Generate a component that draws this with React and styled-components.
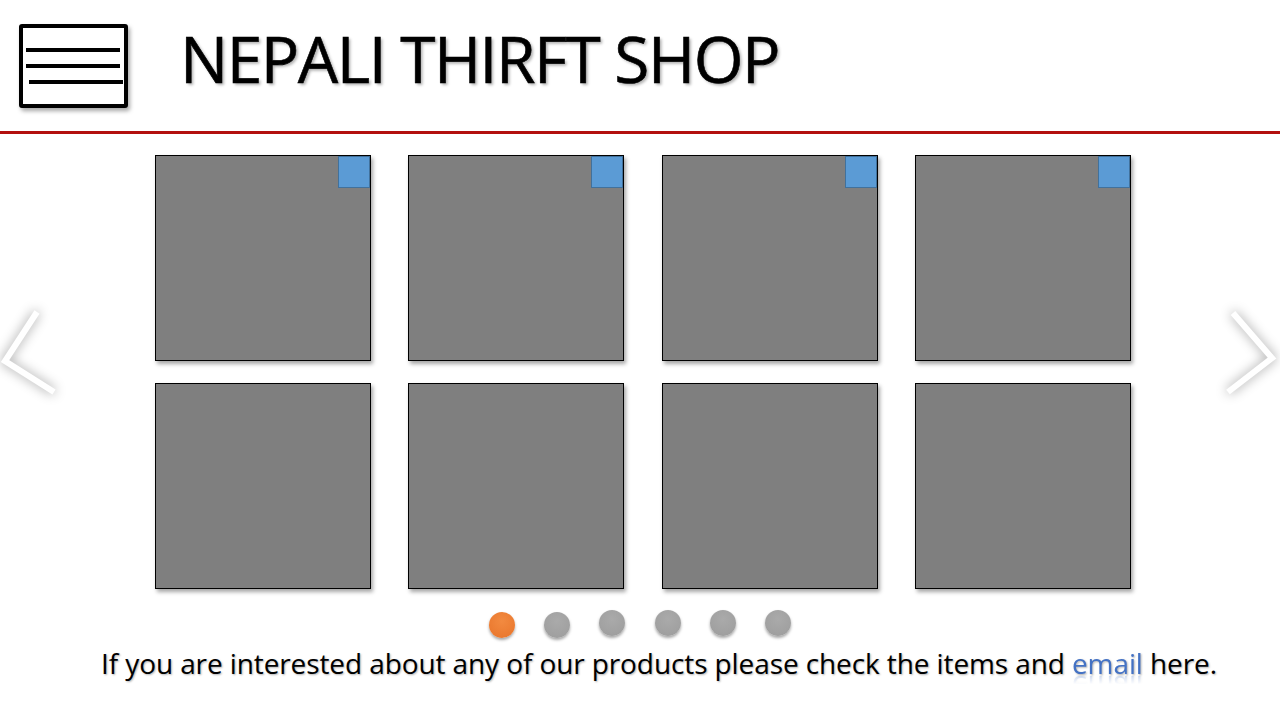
import styled, { createGlobalStyle } from 'styled-components'

const GlobalStyle = createGlobalStyle`
  html, body {
    margin: 0;
    padding: 0;
    background: #ffffff;
  }
  body {
    width: 1280px;
    height: 720px;
    overflow: hidden;
    font-family: 'Open Sans', 'Liberation Sans', sans-serif;
    color: #000;
  }
`

const Slide = styled.div`
  width: 1280px;
  height: 720px;
  display: flex;
  flex-direction: column;
`

const Header = styled.header`
  height: 131px;
  display: flex;
  align-items: center;
  border-bottom: 3px solid #b3100f;
`

const MenuBox = styled.button`
  width: 109px;
  height: 84px;
  margin-left: 19px;
  margin-top: 1px;
  box-sizing: border-box;
  border: 4px solid #000;
  border-radius: 3px;
  background: #fff;
  box-shadow: 2px 3px 4px rgba(0, 0, 0, 0.35);
  display: flex;
  flex-direction: column;
  justify-content: center;
  gap: 12.5px;
  padding: 0 4px 0 3px;
`

const MenuLine = styled.span`
  display: block;
  height: 3.5px;
  background: #000;
  margin-left: ${p => p.$shift || 0}px;
  margin-right: ${p => -(p.$shift || 0)}px;
`

const Title = styled.h1`
  margin: 0 0 14px 52px;
  font-size: 64px;
  font-weight: 400;
  letter-spacing: -1.5px;
  line-height: 1;
  text-shadow: 2px 2px 3px rgba(0, 0, 0, 0.3);
  -webkit-text-stroke: 0.6px #000;
`

const Stage = styled.main`
  display: grid;
  grid-template-columns: 1fr auto 1fr;
  padding-top: 21px;
`

const ArrowSlot = styled.div`
  display: flex;
  justify-content: ${p => (p.$side === 'left' ? 'flex-start' : 'flex-end')};
  align-items: flex-start;
  padding-top: 147px;
`

const ArrowSvg = styled.svg`
  width: 60px;
  height: 100px;
  filter: drop-shadow(0 0 6px rgba(0, 0, 0, 0.4));
`

const ProductGrid = styled.div`
  display: grid;
  grid-template-columns: repeat(4, 216px);
  grid-auto-rows: 206px;
  column-gap: 37.3px;
  row-gap: 22px;
  margin-left: 6px;
`

const Tile = styled.div`
  position: relative;
  background: #7f7f7f;
  border: 1.5px solid #000;
  box-shadow: 2px 3px 4px rgba(0, 0, 0, 0.35);
`

const Badge = styled.span`
  position: absolute;
  top: 0;
  right: 0;
  width: 32px;
  height: 32px;
  box-sizing: border-box;
  background: #5b9bd5;
  border: 1px solid #41719c;
`

const Dots = styled.div`
  display: flex;
  justify-content: center;
  gap: 29.3px;
  margin-top: 21px;
`

const Dot = styled.span`
  width: 26px;
  height: 26px;
  border-radius: 50%;
  background: ${p => (p.$active ? 'radial-gradient(circle at 50% 35%, #f28a40, #e8742a)' : 'radial-gradient(circle at 50% 35%, #aaaaaa, #9c9c9c)')};
  box-shadow: 0 2px 3px rgba(0, 0, 0, 0.35);
  margin-top: ${p => p.$drop || 0}px;
`

const Footnote = styled.p`
  margin: 9px 0 0 101px;
  font-size: 28px;
  letter-spacing: -0.1px;
  line-height: 1.2;
  text-shadow: 1px 1px 2px rgba(0, 0, 0, 0.3);
  white-space: nowrap;
`

const EmailLink = styled.a`
  display: inline-block;
  color: #4472c4;
  text-decoration: none;
  -webkit-box-reflect: below -12px linear-gradient(transparent 55%, rgba(255, 255, 255, 0.45));
`

const Arrow = ({ side }) => (
  <ArrowSlot $side={side}>
    <ArrowSvg viewBox="0 0 60 100">
      {side === 'left'
        ? <polyline points="37,10 5,59 54,90" fill="none" stroke="#fff" strokeWidth="6" />
        : <polyline points="13,11 52,56 8,90" fill="none" stroke="#fff" strokeWidth="6" />}
    </ArrowSvg>
  </ArrowSlot>
)

const App = () => (
  <>
    <GlobalStyle />
    <Slide>
      <Header>
        <MenuBox type="button" aria-label="menu">
          <MenuLine />
          <MenuLine />
          <MenuLine $shift={3} />
        </MenuBox>
        <Title>NEPALI THIRFT SHOP</Title>
      </Header>

      <Stage>
        <Arrow side="left" />
        <ProductGrid>
          {Array.from({ length: 8 }, (_, i) => (
            <Tile key={i}>{i < 4 && <Badge />}</Tile>
          ))}
        </ProductGrid>
        <Arrow side="right" />
      </Stage>

      <Dots>
        {[0, 1, 2, 3, 4, 5].map(i => (
          <Dot key={i} $active={i === 0} $drop={i < 2 ? 2 : 0} />
        ))}
      </Dots>

      <Footnote>
        If you are interested about any of our products please check the items and <EmailLink href="#">email</EmailLink> here.
      </Footnote>
    </Slide>
  </>
)

export default App
